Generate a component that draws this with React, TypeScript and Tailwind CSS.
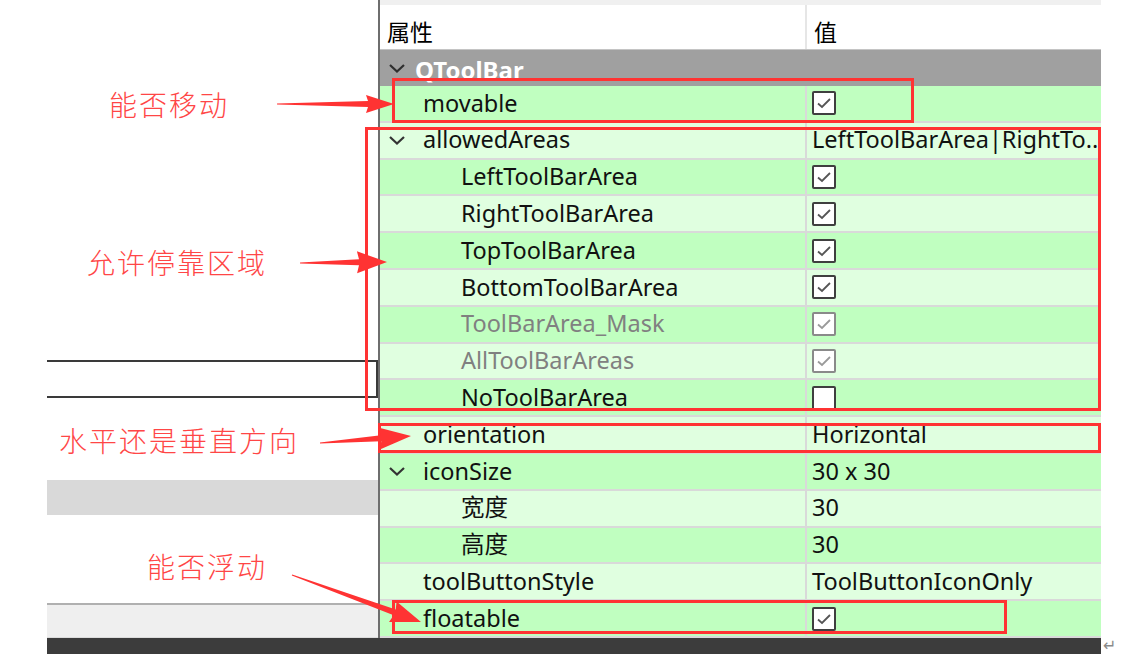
import React from "react";

type Row = {
  name: string;
  level: 1 | 2;
  chevron?: boolean;
  value?: string;
  check?: "on" | "off" | "disabled";
  gray?: boolean;
};

const rows: Row[] = [
  { name: "movable", level: 1, check: "on" },
  { name: "allowedAreas", level: 1, chevron: true, value: "LeftToolBarArea|RightTo.." },
  { name: "LeftToolBarArea", level: 2, check: "on" },
  { name: "RightToolBarArea", level: 2, check: "on" },
  { name: "TopToolBarArea", level: 2, check: "on" },
  { name: "BottomToolBarArea", level: 2, check: "on" },
  { name: "ToolBarArea_Mask", level: 2, check: "disabled", gray: true },
  { name: "AllToolBarAreas", level: 2, check: "disabled", gray: true },
  { name: "NoToolBarArea", level: 2, check: "off" },
  { name: "orientation", level: 1, value: "Horizontal" },
  { name: "iconSize", level: 1, chevron: true, value: "30 x 30" },
  { name: "宽度", level: 2, value: "30" },
  { name: "高度", level: 2, value: "30" },
  { name: "toolButtonStyle", level: 1, value: "ToolButtonIconOnly" },
  { name: "floatable", level: 1, check: "on" },
];

function Chevron({ color = "#333" }: { color?: string }) {
  return (
    <svg width="18" height="10" viewBox="0 0 18 10" className="absolute left-[8px] top-1/2 -translate-y-1/2">
      <polyline points="2,2 9,8.5 16,2" fill="none" stroke={color} strokeWidth="2.2" />
    </svg>
  );
}

function CheckBox({ state }: { state: "on" | "off" | "disabled" }) {
  const border = state === "disabled" ? "border-[#8a8a8a]" : "border-[#3f3f3f]";
  const stroke = state === "disabled" ? "#9a9a9a" : "#555";
  return (
    <div className={`w-[24px] h-[24px] border-2 ${border} bg-white rounded-[2px] flex items-center justify-center`}>
      {state !== "off" && (
        <svg width="18" height="18" viewBox="0 0 18 18">
          <polyline points="3,9.5 7,13 15,5" fill="none" stroke={stroke} strokeWidth="1.8" />
        </svg>
      )}
    </div>
  );
}

function arrowPoints(x1: number, y1: number, x2: number, y2: number, headLen: number, headHalf: number, shaftHalf: number) {
  const dx = x2 - x1;
  const dy = y2 - y1;
  const len = Math.hypot(dx, dy);
  const ux = dx / len;
  const uy = dy / len;
  const nx = -uy;
  const ny = ux;
  const bx = x2 - ux * headLen;
  const by = y2 - uy * headLen;
  const pts: [number, number][] = [
    [x1 + nx * 0.6, y1 + ny * 0.6],
    [bx + nx * shaftHalf, by + ny * shaftHalf],
    [bx - ux * 2 + nx * headHalf, by - uy * 2 + ny * headHalf],
    [x2, y2],
    [bx - ux * 2 - nx * headHalf, by - uy * 2 - ny * headHalf],
    [bx - nx * shaftHalf, by - ny * shaftHalf],
    [x1 - nx * 0.6, y1 - ny * 0.6],
  ];
  return pts.map((p) => `${p[0].toFixed(1)},${p[1].toFixed(1)}`).join(" ");
}

export default function App() {
  return (
    <div className="relative w-[1146px] h-[654px] bg-white overflow-hidden font-['Noto_Sans','Noto_Sans_CJK_SC',sans-serif] text-black">
      <div className="flex h-[638px]">
        <div className="w-[47px] shrink-0" />
        {/* left canvas */}
        <div className="w-[331px] shrink-0 flex flex-col">
          <div className="h-[360px]" />
          <div className="h-[38px] border-y-2 border-r-2 border-[#3a3a3a]" />
          <div className="h-[82px]" />
          <div className="h-[35px] bg-[#d9d9d9]" />
          <div className="h-[88px]" />
          <div className="h-[35px] border-t-2 border-[#b0b0b0] bg-[#efefef] border-b border-b-[#dcdcdc]" />
        </div>
        {/* property panel */}
        <div className="w-[723px] shrink-0 border-l-2 border-[#6e6e6e] flex flex-col">
          <div className="h-[5px] bg-[#f0f0f0]" />
          <div className="h-[45px] flex bg-white border-b border-[#c4c4c4] text-[23px] leading-none font-['Noto_Sans_CJK_SC',sans-serif]">
            <div className="w-[427px] border-r-2 border-[#e6e6e6] pl-[7px] pt-[15px]">属性</div>
            <div className="flex-1 pl-[7px] pt-[15px]">值</div>
          </div>
          <div className="relative h-[36px] bg-[#a0a0a0] overflow-hidden">
            <svg width="18" height="10" viewBox="0 0 18 10" className="absolute left-[8px] top-[13px]">
              <polyline points="2,2 9,8.5 16,2" fill="none" stroke="#2e2e2e" strokeWidth="2.2" />
            </svg>
            <div className="pl-[35px] pt-[8px] text-white font-bold text-[24px] leading-[24px]">QToolBar</div>
          </div>
          {rows.map((r, i) => (
            <div
              key={r.name}
              className={`h-[36.8px] flex border-b-2 border-[#d9d9d9] ${i % 2 === 0 ? "bg-[#c0ffc0]" : "bg-[#e0ffe0]"}`}
            >
              <div className="relative w-[427px] border-r-2 border-[#d9d9d9] flex items-center">
                {r.chevron && <Chevron />}
                <span
                  className={`${r.level === 1 ? "pl-[43px]" : "pl-[81px]"} text-[23.5px] leading-none ${r.gray ? "text-[#808080]" : "text-[#111]"}`}
                >
                  {r.name}
                </span>
              </div>
              <div className="flex-1 flex items-center pl-[5px] overflow-hidden whitespace-nowrap">
                {r.check ? <CheckBox state={r.check} /> : <span className="text-[23.5px] leading-none text-[#111]">{r.value}</span>}
              </div>
            </div>
          ))}
        </div>
        <div className="flex-1" />
      </div>
      <div className="flex h-[16px]">
        <div className="w-[47px] shrink-0" />
        <div className="w-[1054px] shrink-0 bg-[#3c3c3c]" />
        <div className="flex-1 text-[16px] leading-[15px] text-[#8a8a8a] pl-[2px] font-['DejaVu_Sans',sans-serif]">↵</div>
      </div>

      {/* annotation overlays */}
      <div className="absolute left-[392px] top-[78px] w-[522px] h-[45px] border-[3px] border-[#ff3333] pointer-events-none" />
      <div className="absolute left-[365px] top-[127px] w-[736px] h-[284px] border-[3px] border-[#ff3333] pointer-events-none" />
      <div className="absolute left-[378px] top-[423px] w-[723px] h-[30px] border-[3px] border-[#ff3333] pointer-events-none" />
      <div className="absolute left-[392px] top-[600px] w-[615px] h-[34px] border-[3px] border-[#ff3333] pointer-events-none" />

      <svg className="absolute left-0 top-0 pointer-events-none" width="1146" height="654">
        <polygon points={arrowPoints(277, 104, 394, 104, 26, 9, 3)} fill="#ff3333" />
        <polygon points={arrowPoints(300, 263, 387, 262, 28, 11, 3)} fill="#ff3333" />
        <polygon points={arrowPoints(320, 443, 411, 436, 30, 11, 3)} fill="#ff3333" />
        <polygon points={arrowPoints(292, 575, 421, 622, 28, 11, 3)} fill="#ff3333" />
      </svg>

      <div className="absolute left-[109px] top-[86px] text-[28px] tracking-[2px] leading-[36px] text-[#ff4646] font-['Noto_Sans_CJK_SC',sans-serif] font-light">能否移动</div>
      <div className="absolute left-[87px] top-[244px] text-[28px] tracking-[2px] leading-[36px] text-[#ff4646] font-['Noto_Sans_CJK_SC',sans-serif] font-light">允许停靠区域</div>
      <div className="absolute left-[59px] top-[422px] text-[28px] tracking-[2px] leading-[36px] text-[#ff4646] font-['Noto_Sans_CJK_SC',sans-serif] font-light">水平还是垂直方向</div>
      <div className="absolute left-[147px] top-[548px] text-[28px] tracking-[2px] leading-[36px] text-[#ff4646] font-['Noto_Sans_CJK_SC',sans-serif] font-light">能否浮动</div>
    </div>
  );
}
